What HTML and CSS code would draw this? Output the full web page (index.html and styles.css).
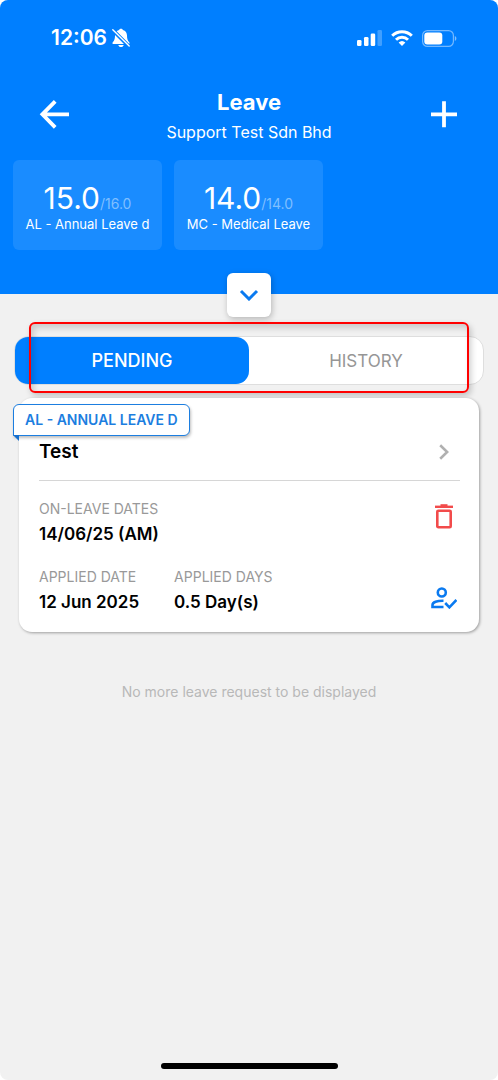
FILE: index.html
```html
<!DOCTYPE html>
<html lang="en">
<head>
<meta charset="utf-8">
<meta name="viewport" content="width=device-width, initial-scale=1">
<title>Leave</title>
<link rel="stylesheet" href="styles.css">
</head>
<body>
<div class="screen">
  <header class="header">
    <div class="status">
      <div class="status-left">
        <span class="clock">12:06</span>
        <svg class="bell" viewBox="0 0 18 20" aria-hidden="true">
          <path fill="#fff" d="M9 .7c.9 0 1.600.5 1.900 1.200C13.600 2.700 15 4.800 15 7.500c0 3.500.7 5.200 2.200 6.700.7.800.3 1.800-.7 1.800h-15c-1 0-1.400-1-.7-1.800C2.300 12.700 3 11 3 7.500c0-2.700 1.400-4.800 4.100-5.600C7.400 1.200 8.100.7 9 .7zM6.300 17h5.400c-.2 1.300-1.300 2.100-2.700 2.100S6.500 18.300 6.300 17z"/>
          <path d="M.8 2.200 16.800 18.200" stroke="#007fff" stroke-width="3.800"/>
          <path d="M.8 1.800 17.200 18" stroke="#fff" stroke-width="1.400" stroke-linecap="round"/>
        </svg>
      </div>
      <div class="status-right">
        <svg class="signal" viewBox="0 0 25 16" aria-hidden="true" fill="#fff">
          <rect x="0" y="10" width="4.500" height="6" rx="1.300"/>
          <rect x="7" y="7" width="4.500" height="9" rx="1.300"/>
          <rect x="13.700" y="3.500" width="4.500" height="12.500" rx="1.300"/>
          <rect x="20.500" y="0" width="4.500" height="16" rx="1.300" opacity=".25"/>
        </svg>
        <svg class="wifi" viewBox="0 0 22 16" aria-hidden="true" fill="none" stroke="#fff" stroke-width="3">
          <path d="M1.200 5.800a14 14 0 0 1 19.600 0"/>
          <path d="M5 9.700a8.600 8.600 0 0 1 12 0"/>
          <path fill="#fff" stroke="none" d="M7.600 12.500a5 5 0 0 1 6.800 0L11 16z"/>
        </svg>
        <svg class="battery" viewBox="0 0 35 17" aria-hidden="true">
          <rect x=".6" y=".6" width="30.800" height="15.800" rx="4.800" fill="none" stroke="#fff" stroke-opacity=".45" stroke-width="1.200"/>
          <rect x="2.300" y="2.500" width="18" height="12" rx="3" fill="#fff"/>
          <path d="M32.800 6v5c1-.4 1.600-1.400 1.600-2.500S33.800 6.400 32.800 6z" fill="#fff" opacity=".5"/>
        </svg>
      </div>
    </div>

    <div class="title-row">
      <button class="icon-button" type="button" aria-label="Back">
        <svg class="icon-nav" viewBox="0 0 32 32" fill="none" stroke="#fff" stroke-width="3.800"><path d="M31 16.300H5M17.200 3.300 4.400 16.300l12.800 13"/></svg>
      </button>
      <div class="titles">
        <h1 class="title">Leave</h1>
        <p class="subtitle">Support Test Sdn Bhd</p>
      </div>
      <button class="icon-button" type="button" aria-label="Add leave">
        <svg class="icon-nav" viewBox="0 0 32 32" fill="none" stroke="#fff" stroke-width="3.800"><path d="M3 16.300h26M16 3.300v26"/></svg>
      </button>
    </div>

    <div class="balances">
      <div class="balance">
        <p class="amount">15.0<span class="total">/16.0</span></p>
        <p class="balance-name">AL - Annual Leave d</p>
      </div>
      <div class="balance">
        <p class="amount">14.0<span class="total">/14.0</span></p>
        <p class="balance-name">MC - Medical Leave</p>
      </div>
    </div>
    <button class="expand" type="button" aria-label="Show more balances">
      <svg class="expand-icon" viewBox="0 0 20 12" fill="none" stroke="#0a7af0" stroke-width="3"><path d="m2 2 8 8 8-8"/></svg>
    </button>
  </header>

  <main class="content">
    <div class="tabs-wrap">
      <div class="tabs" role="tablist">
        <button class="tab tab-active" type="button" role="tab" aria-selected="true">PENDING</button>
        <button class="tab" type="button" role="tab" aria-selected="false">HISTORY</button>
      </div>
      <div class="highlight"></div>
    </div>

    <article class="card">
      <span class="ribbon">AL - ANNUAL LEAVE D</span>
      <div class="card-head">
        <h2 class="reason">Test</h2>
        <button class="action" type="button" aria-label="Open request">
          <svg class="chevron" viewBox="0 0 10 16" fill="none" stroke="#b0b0b0" stroke-width="2.600"><path d="m1.200 1.200 7 6.800-7 6.800"/></svg>
        </button>
      </div>
      <div class="card-row">
        <dl class="field">
          <dt class="label">ON-LEAVE DATES</dt>
          <dd class="value">14/06/25 (AM)</dd>
        </dl>
        <button class="action" type="button" aria-label="Delete request">
          <svg class="trash" viewBox="0 0 20 26" fill="none" stroke="#f24b4b"><path stroke-width="2.400" d="M1 3.800h18"/><path stroke-width="2.200" d="M6.500 2.300h7"/><rect x="3.300" y="7.800" width="13.400" height="16.400" rx="1" stroke-width="2.600"/></svg>
        </button>
      </div>
      <div class="card-row">
        <div class="fields">
          <dl class="field">
            <dt class="label">APPLIED DATE</dt>
            <dd class="value">12 Jun 2025</dd>
          </dl>
          <dl class="field">
            <dt class="label">APPLIED DAYS</dt>
            <dd class="value">0.5 Day(s)</dd>
          </dl>
        </div>
        <button class="action action-low" type="button" aria-label="View approver">
          <svg class="approver" viewBox="0 0 26 22" fill="none" stroke="#0a7af0" stroke-width="2.600"><circle cx="10.800" cy="5.500" r="4"/><path d="M12.500 20H1.500v-2c0-3 4.500-4.400 11-4.300"/><path d="m14.200 16 4.200 4.300 7-7.300"/></svg>
        </button>
      </div>
    </article>

    <p class="empty">No more leave request to be displayed</p>
  </main>
  <div class="home-bar"></div>
</div>
</body>
</html>
```
FILE: styles.css
```css
* { box-sizing: border-box; }

body {
  margin: 0;
  background: #fff;
  font-family: Inter, "Liberation Sans", sans-serif;
  color: #000;
}

h1, h2, p, dl, dd { margin: 0; }

button {
  padding: 0;
  border: 0;
  background: none;
  font: inherit;
  cursor: pointer;
}

svg { display: block; }

.screen {
  display: flex;
  flex-direction: column;
  min-height: 100vh;
  border-radius: 8px;
  background: #f1f1f1;
  overflow: hidden;
}

.header {
  position: relative;
  padding-bottom: 44px;
  background: #007fff;
  color: #fff;
}

.status {
  display: flex;
  align-items: center;
  justify-content: space-between;
  height: 76px;
  padding: 0 41px 0 51px;
}

.status-left { display: flex; align-items: center; gap: 5px; }
.status-right { display: flex; align-items: center; gap: 9px; }
.clock { font-size: 21px; font-weight: 600; line-height: 24px; }
.bell { width: 18px; height: 20px; }
.signal { width: 25px; height: 16px; }
.wifi { width: 22px; height: 16px; }
.battery { width: 35px; height: 17px; }

.title-row {
  display: flex;
  align-items: center;
  justify-content: space-between;
  height: 84px;
  padding: 0 38px;
}

.icon-button { padding-bottom: 8px; }
.icon-nav { width: 32px; height: 32px; }
.titles { padding-bottom: 2px; text-align: center; }
.title { font-size: 22px; font-weight: 700; line-height: 30px; }
.subtitle { font-size: 16px; line-height: 30px; }

.balances {
  display: flex;
  gap: 12px;
  padding: 0 13px;
}

.balance {
  flex: 0 0 149px;
  height: 90px;
  padding-top: 20px;
  border-radius: 6px;
  background: #1a8cff;
  text-align: center;
}

.amount { font-size: 30px; line-height: 36px; }
.total { font-size: 14px; line-height: 14px; color: #7fbfff; }
.balance-name { font-size: 13px; line-height: 16px; }

.expand {
  position: absolute;
  bottom: -23px;
  left: calc(50% - 22px);
  display: grid;
  place-items: center;
  width: 44px;
  height: 44px;
  border-radius: 6px;
  background: #fff;
  box-shadow: 1px 2px 6px rgba(0, 0, 0, 0.25);
}

.expand-icon { width: 20px; height: 12px; }

.content { flex: 1; padding: 42px 14px 0; }

.tabs-wrap { position: relative; }

.tabs {
  display: flex;
  height: 49px;
  border: 1px solid #dedede;
  border-radius: 14px;
  background: #fff;
}

.tab {
  flex: 1;
  border-radius: 13px;
  font-size: 17px;
  color: #969696;
}

.tab-active {
  background: #007fff;
  color: #fff;
  font-size: 18px;
  font-weight: 500;
}

.highlight {
  position: absolute;
  inset: -14px 15px -8px 15px;
  border: 2px solid #f00;
  border-radius: 6px;
  box-shadow: 2px 3px 6px rgba(0, 0, 0, 0.2), inset 3px 4px 6px rgba(0, 0, 0, 0.16);
  pointer-events: none;
}

.card {
  position: relative;
  margin: 13px 5px 0;
  padding: 25px 19px 15px 20px;
  border-radius: 13px;
  background: #fff;
  box-shadow: 1px 1px 3px rgba(0, 0, 0, 0.35);
}

.ribbon {
  position: absolute;
  top: 6px;
  left: -6px;
  padding: 0 11px;
  border: 1px solid #1c7ee0;
  border-radius: 6px 6px 6px 0;
  background: #fff;
  box-shadow: 1px 2px 3px rgba(0, 0, 0, 0.25);
  color: #1c7ee0;
  font-size: 14px;
  font-weight: 600;
  line-height: 30px;
}

.ribbon::after {
  content: "";
  position: absolute;
  top: 100%;
  left: -1px;
  border-top: 6px solid #1670cf;
  border-left: 6px solid transparent;
}

.card-head,
.card-row {
  display: flex;
  justify-content: space-between;
}

.card-head {
  align-items: center;
  height: 58px;
  border-bottom: 1px solid #d6d6d6;
}

.card-row { padding-top: 18px; }
.fields { display: flex; gap: 35px; }
.reason { font-size: 19px; font-weight: 600; line-height: 24px; }
.label { font-size: 14px; line-height: 20px; color: #999; }
.value { font-size: 17px; font-weight: 600; line-height: 30px; }

.action {
  display: grid;
  place-items: center;
  width: 32px;
  height: 34px;
}

.action-low {
  align-self: flex-end;
  height: 38px;
}

.chevron { width: 10px; height: 16px; }
.trash { width: 20px; height: 26px; }
.approver { width: 26px; height: 22px; }

.empty {
  margin-top: 48px;
  color: #b8b8b8;
  font-size: 14px;
  line-height: 24px;
  text-align: center;
}

.home-bar {
  width: 177px;
  height: 6px;
  margin: 0 auto 11px;
  border-radius: 3px;
  background: #000;
}
```
